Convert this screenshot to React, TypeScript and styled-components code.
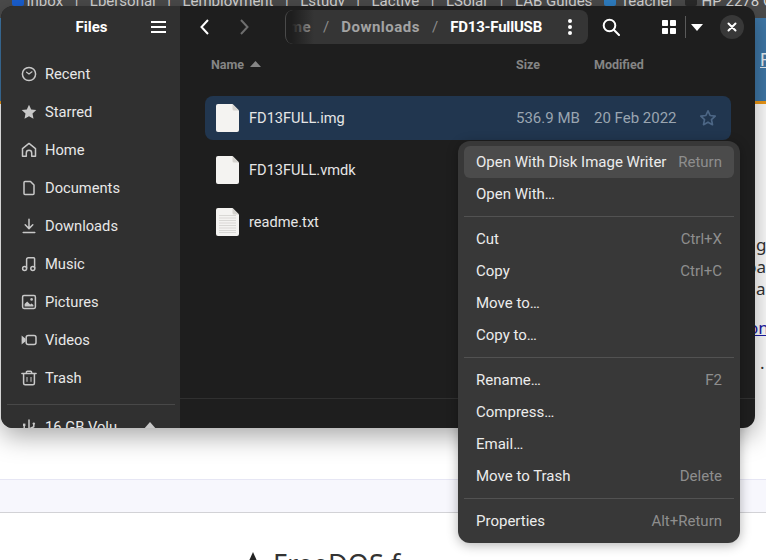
import React from 'react';
import styled, { createGlobalStyle } from 'styled-components';

const GlobalStyle = createGlobalStyle`
  html, body {
    margin: 0;
    padding: 0;
    background: #fff;
  }
  body {
    font-family: Roboto, 'Noto Sans', sans-serif;
  }
`;

const Desktop = styled.div`
  position: relative;
  width: 766px;
  height: 560px;
  overflow: hidden;
  background: #fff;
`;

/* browser page behind the window */
const BookmarkBar = styled.div`
  height: 18px;
  background: #4b4b4b;
  color: #d6d6d6;
  font-size: 15px;
  line-height: 15px;
  display: flex;
  gap: 11.5px;
  padding-left: 12px;
  white-space: nowrap;
  overflow: hidden;
  & > span {
    margin-top: -6px;
  }
`;

const Favicon = styled.i<{ $color: string; $pull?: number }>`
  flex: none;
  width: 12px;
  height: 12px;
  margin-top: -6px;
  margin-right: ${p => p.$pull ?? 0}px;
  border-radius: 2px;
  background: ${p => p.$color};
`;

const SiteHeader = styled.div`
  height: 86px;
  box-sizing: border-box;
  padding: 31px 0 0 760px;
  background: #3f78a8;
  border-bottom: 3px solid #f09a16;
  color: #e8f0f6;
  font-size: 18px;
  line-height: 22px;
  text-decoration: underline;
  white-space: nowrap;
  overflow: hidden;
`;

const ArticleText = styled.div`
  height: 375px;
  box-sizing: border-box;
  padding-top: 130px;
  white-space: nowrap;
  overflow: hidden;
  color: #333;
  font-family: 'Noto Sans', sans-serif;
  font-size: 17px;
  line-height: 22px;
`;

const ArticleLine = styled.div<{ $left: number }>`
  padding-left: ${p => p.$left}px;
`;

const ArticleLink = styled(ArticleLine)`
  margin-top: 17px;
  color: #1a1aa6;
  text-decoration: underline;
`;

const ArticleDot = styled(ArticleLine)`
  margin-top: 13px;
`;

const Band = styled.div`
  height: 32px;
  background: #f7f7fd;
  border-top: 1px solid #e6e6f4;
  border-bottom: 1px solid #d2d2d6;
`;

const SiteTitle = styled.div`
  display: flex;
  align-items: center;
  gap: 10px;
  padding: 34px 0 0 243px;
  color: #333;
  font-family: 'Noto Sans', sans-serif;
  font-size: 27px;
  line-height: 34px;
  white-space: nowrap;
`;

/* files window */
const Window = styled.div`
  position: absolute;
  left: 1px;
  top: 6px;
  width: 754px;
  height: 422px;
  border-radius: 12px;
  overflow: hidden;
  display: grid;
  grid-template-columns: 179px 1fr;
  background: #1e1e1e;
  color: #fff;
  box-shadow: 0 8px 26px rgba(0, 0, 0, 0.35);
`;

const Sidebar = styled.aside`
  background: #303030;
  overflow: hidden;
`;

const SidebarHeader = styled.div`
  height: 42px;
  display: flex;
  align-items: center;
  justify-content: center;
  position: relative;
  padding-left: 2px;
  font-size: 15px;
  font-weight: 700;
`;

const MenuButton = styled.span`
  position: absolute;
  left: 150px;
  top: 15px;
  display: flex;
`;

const Places = styled.div`
  padding-top: 7px;
`;

const Place = styled.div`
  height: 38px;
  display: flex;
  align-items: center;
  gap: 8px;
  padding-left: 20px;
  font-size: 14.7px;
  color: #e8e8e8;
  white-space: nowrap;
  svg {
    flex: none;
    color: #c8c8c8;
  }
`;

const SidebarRule = styled.div`
  height: 1px;
  margin: 7px 5px 3px 6px;
  background: #484848;
`;

const Eject = styled.span`
  margin-left: 18px;
  display: flex;
  color: #c8c8c8;
`;

const Main = styled.main`
  display: flex;
  flex-direction: column;
  min-width: 0;
`;

const HeaderBar = styled.div`
  height: 42px;
  display: flex;
  align-items: center;
  padding-left: 5px;
`;

const NavButton = styled.span<{ $dim?: boolean }>`
  width: 39px;
  display: flex;
  justify-content: center;
  color: ${p => (p.$dim ? '#6e6e6e' : '#fff')};
`;

const PathBar = styled.div`
  position: relative;
  margin-left: 22px;
  width: 303px;
  height: 34px;
  flex: none;
  border-radius: 8px;
  background: #353535;
  display: flex;
  align-items: center;
  justify-content: flex-end;
  overflow: hidden;
  font-size: 15px;
  font-weight: 700;
  white-space: nowrap;
  &::before {
    content: '';
    position: absolute;
    left: 0;
    top: 0;
    bottom: 0;
    width: 28px;
    background: linear-gradient(90deg, #1e1e1e 20%, rgba(53, 53, 53, 0) 100%);
    border-left: 1px solid #4a4a4a;
    border-radius: 8px 0 0 8px;
  }
`;

const Crumb = styled.span<{ $current?: boolean }>`
  color: ${p => (p.$current ? '#fff' : '#a3a3a3')};
  letter-spacing: ${p => (p.$current ? '-0.2px' : '0.5px')};
`;

const CrumbSlash = styled.span`
  color: #8c8c8c;
  font-weight: 400;
  margin: 0 12px;
`;

const PathMenu = styled.span`
  width: 36px;
  margin-left: 10px;
  display: flex;
  justify-content: center;
  flex: none;
`;

const IconButton = styled.span<{ $w: number; $gap?: number }>`
  width: ${p => p.$w}px;
  margin-left: ${p => p.$gap ?? 0}px;
  display: flex;
  justify-content: center;
  align-items: center;
  flex: none;
`;

const ViewDivider = styled.span`
  width: 1px;
  height: 22px;
  background: #5a5a5a;
  margin-left: 5px;
  flex: none;
`;

const CloseButton = styled.span`
  width: 24px;
  height: 24px;
  flex: none;
  border-radius: 50%;
  background: #383838;
  display: flex;
  align-items: center;
  justify-content: center;
  margin-left: 12px;
`;

const ColumnHeader = styled.div`
  height: 32px;
  display: grid;
  grid-template-columns: 305px 78px 1fr;
  padding-left: 31px;
  align-items: center;
  font-size: 12.5px;
  font-weight: 700;
  color: #858585;
`;

const SortName = styled.span`
  display: flex;
  align-items: center;
  gap: 6px;
`;

const FileList = styled.div`
  padding: 16px 24px 0 25px;
  flex: 1;
`;

const FileRow = styled.div<{ $selected?: boolean }>`
  height: 44px;
  margin-bottom: 8px;
  border-radius: 8px;
  display: grid;
  grid-template-columns: 44px 267px 78px 1fr 32px;
  align-items: center;
  font-size: 14.6px;
  color: #e6e6e6;
  background: ${p => (p.$selected ? '#21364f' : 'transparent')};
`;

const FileIconCell = styled.span`
  display: flex;
  justify-content: center;
`;

const FileMeta = styled.span`
  font-size: 15px;
  color: #9aa5b1;
`;

const StarCell = styled.span`
  display: flex;
  color: #4c6685;
`;

const StatusLine = styled.div`
  height: 29px;
  border-top: 1px solid #303030;
`;

const ContextMenu = styled.div`
  position: absolute;
  left: 458px;
  top: 141px;
  width: 282px;
  box-sizing: border-box;
  padding: 5px 6px 6px;
  border-radius: 12px;
  background: #383838;
  box-shadow: 0 2px 12px rgba(0, 0, 0, 0.3);
  font-size: 15px;
  color: #ececec;
`;

const MenuItem = styled.div<{ $active?: boolean }>`
  height: 32px;
  padding: 0 12px;
  display: flex;
  align-items: center;
  justify-content: space-between;
  white-space: nowrap;
  border-radius: 6px;
  background: ${p => (p.$active ? '#4b4b4b' : 'transparent')};
`;

const Shortcut = styled.span`
  color: #8e8e8e;
`;

const MenuRule = styled.div`
  height: 1px;
  margin: 6px 0;
  background: #525252;
`;

const Svg = ({ size = 16, children }: { size?: number; children: React.ReactNode }) => (
  <svg width={size} height={size} viewBox="0 0 16 16" fill="none" stroke="currentColor" strokeWidth="1.5" strokeLinecap="round" strokeLinejoin="round">
    {children}
  </svg>
);

const icons: Record<string, React.ReactNode> = {
  recent: (
    <Svg>
      <circle cx="8" cy="8" r="6.6" />
      <path d="M8 8l3-2.2M8 8L5.6 6.2" strokeWidth="1.2" />
    </Svg>
  ),
  star: (
    <Svg>
      <path d="M8 .8l2.2 4.7 5.1.6-3.8 3.500 1 5.100L8 12.200l-4.500 2.500 1-5.100L.7 6.100l5.100-.6z" fill="currentColor" stroke="none" />
    </Svg>
  ),
  starOutline: (
    <Svg size={18}>
      <path d="M8 1.600l1.900 4.200 4.500.5-3.300 3.100.9 4.500L8 11.700l-4 2.200.9-4.500L1.600 6.300l4.500-.5z" />
    </Svg>
  ),
  home: (
    <Svg>
      <path d="M1.500 14.200V6.600L8 1.400l6.500 5.200v7.600h-3.800v-3.200a2.700 2.700 0 0 0-5.400 0v3.200z" />
    </Svg>
  ),
  doc: (
    <Svg>
      <path d="M3 2.400c0-.6.4-1 1-1h5.500L13 5v8.600c0 .6-.4 1-1 1H4c-.6 0-1-.4-1-1z" />
    </Svg>
  ),
  download: (
    <Svg>
      <path d="M8 1.200v9M4.200 6.800L8 10.600l3.800-3.800M2.200 14.400h11.600" />
    </Svg>
  ),
  music: (
    <Svg>
      <path d="M5.600 12V3.600c0-1 .8-1.800 1.800-1.800h5.200c.6 0 1 .4 1 1V12" />
      <circle cx="3.600" cy="12.400" r="2" />
      <circle cx="11.800" cy="12.400" r="2" />
    </Svg>
  ),
  pictures: (
    <Svg>
      <rect x="1.600" y="1.600" width="12.800" height="12.800" rx="1.400" />
      <circle cx="10.600" cy="5.400" r="1.300" fill="currentColor" stroke="none" />
      <path d="M3.600 12.400V10l2.600-2.600 3 3 1.400-1 1.800 1.600v1.400z" fill="currentColor" stroke="none" />
    </Svg>
  ),
  video: (
    <Svg>
      <rect x="5.200" y="3.400" width="9.800" height="9.200" rx="2" />
      <path d="M.6 3.600l4 3.200v2.400l-4 3.200z" fill="currentColor" stroke="none" />
    </Svg>
  ),
  trash: (
    <Svg>
      <path d="M.9 3.600h14.200M5.400 3.400V2.200c0-.6.4-1 1-1h3.200c.6 0 1 .4 1 1v1.200M2.600 4v9.200c0 .9.6 1.500 1.500 1.500h7.800c.9 0 1.500-.6 1.500-1.500V4" />
      <path d="M6 7.400v4M10 7.400v4" strokeWidth="1" />
    </Svg>
  ),
  usb: (
    <Svg>
      <path d="M8 1v14M3.200 7v2.400l4.800 2.400M12.800 5.400v2.400L8 10" />
      <rect x="2" y="4.600" width="2.400" height="2.400" fill="currentColor" stroke="none" />
      <circle cx="12.800" cy="4.600" r="1.200" fill="currentColor" stroke="none" />
    </Svg>
  ),
};

const places = [
  { icon: 'recent', label: 'Recent' },
  { icon: 'star', label: 'Starred' },
  { icon: 'home', label: 'Home' },
  { icon: 'doc', label: 'Documents' },
  { icon: 'download', label: 'Downloads' },
  { icon: 'music', label: 'Music' },
  { icon: 'pictures', label: 'Pictures' },
  { icon: 'video', label: 'Videos' },
  { icon: 'trash', label: 'Trash' },
];

const FileIcon = ({ lines }: { lines?: boolean }) => (
  <svg width="23" height="28" viewBox="0 0 23 28">
    <path d="M2 0h14.500L23 6.500V26a2 2 0 0 1-2 2H2a2 2 0 0 1-2-2V2a2 2 0 0 1 2-2z" fill="#f4f3f1" />
    <path d="M16.500 0L23 6.500h-5a1.500 1.500 0 0 1-1.500-1.500z" fill="#d5d3cf" />
    {lines &&
      [7, 9.5, 12, 14.5, 17, 19.5, 22, 24].map(y => (
        <rect key={y} x="3" y={y} width="17" height="1" fill="#d9d8d5" />
      ))}
  </svg>
);

const files = [
  { name: 'FD13FULL.img', size: '536.9 MB', date: '20 Feb 2022', selected: true },
  { name: 'FD13FULL.vmdk' },
  { name: 'readme.txt', lines: true },
];

type Entry = { label: string; hint?: string; active?: boolean } | 'rule';

const menuEntries: Entry[] = [
  { label: 'Open With Disk Image Writer', hint: 'Return', active: true },
  { label: 'Open With…' },
  'rule',
  { label: 'Cut', hint: 'Ctrl+X' },
  { label: 'Copy', hint: 'Ctrl+C' },
  { label: 'Move to…' },
  { label: 'Copy to…' },
  'rule',
  { label: 'Rename…', hint: 'F2' },
  { label: 'Compress…' },
  { label: 'Email…' },
  { label: 'Move to Trash', hint: 'Delete' },
  'rule',
  { label: 'Properties', hint: 'Alt+Return' },
];

export default function App() {
  return (
    <Desktop>
      <GlobalStyle />

      <BookmarkBar>
        <Favicon $color="#1a5fd0" $pull={-9} />
        <span>Inbox</span>
        <span>|</span>
        <span>Lpersonal</span>
        <span>|</span>
        <span>Lemployment</span>
        <span>|</span>
        <span>Lstudy</span>
        <span>|</span>
        <span>Lactive</span>
        <span>|</span>
        <span>LSolar</span>
        <span>|</span>
        <span>LAB Guides</span>
        <Favicon $color="#2f7fc4" $pull={-4} />
        <span>reacher</span>
        <Favicon $color="#2a2a2a" $pull={-7} />
        <span>HP 2278 G2</span>
      </BookmarkBar>
      <SiteHeader>R</SiteHeader>
      <ArticleText>
        <ArticleLine $left={756}>gu</ArticleLine>
        <ArticleLine $left={746}>pa</ArticleLine>
        <ArticleLine $left={756}>al</ArticleLine>
        <ArticleLink $left={748}>on</ArticleLink>
        <ArticleDot $left={760}>.</ArticleDot>
      </ArticleText>
      <Band />
      <SiteTitle>
        <svg width="20" height="24" viewBox="0 0 20 24">
          <path d="M10 0l9 20H1z" fill="#222" />
        </svg>
        FreeDOS f
      </SiteTitle>

      <Window>
        <Sidebar>
          <SidebarHeader>
            Files
            <MenuButton>
              <svg width="15" height="12" viewBox="0 0 15 12" fill="#fff">
                <rect width="15" height="2" />
                <rect y="5" width="15" height="2" />
                <rect y="10" width="15" height="2" />
              </svg>
            </MenuButton>
          </SidebarHeader>
          <Places>
            {places.map(p => (
              <Place key={p.label}>
                {icons[p.icon]}
                {p.label}
              </Place>
            ))}
            <SidebarRule />
            <Place>
              {icons.usb}
              16 GB Volu
              <Eject>
                <svg width="14" height="10" viewBox="0 0 14 10" fill="currentColor">
                  <path d="M7 0l7 8H0z" />
                </svg>
              </Eject>
            </Place>
          </Places>
        </Sidebar>

        <Main>
          <HeaderBar>
            <NavButton>
              <svg width="16" height="18" viewBox="0 0 16 18" fill="none" stroke="currentColor" strokeWidth="2">
                <path d="M11 2L4.500 9l6.500 7" />
              </svg>
            </NavButton>
            <NavButton $dim>
              <svg width="16" height="18" viewBox="0 0 16 18" fill="none" stroke="currentColor" strokeWidth="2">
                <path d="M5 2l6.500 7L5 16" />
              </svg>
            </NavButton>
            <PathBar>
              <Crumb>Home</Crumb>
              <CrumbSlash>/</CrumbSlash>
              <Crumb>Downloads</Crumb>
              <CrumbSlash>/</CrumbSlash>
              <Crumb $current>FD13-FullUSB</Crumb>
              <PathMenu>
                <svg width="4" height="16" viewBox="0 0 4 16" fill="#fff">
                  <circle cx="2" cy="2" r="2" />
                  <circle cx="2" cy="8" r="2" />
                  <circle cx="2" cy="14" r="2" />
                </svg>
              </PathMenu>
            </PathBar>
            <IconButton $w={46}>
              <svg width="18" height="18" viewBox="0 0 18 18" fill="none" stroke="#fff" strokeWidth="2">
                <circle cx="7.500" cy="7.500" r="5.800" />
                <path d="M11.800 11.800L17 17" strokeLinecap="round" />
              </svg>
            </IconButton>
            <IconButton $w={22} $gap={24}>
              <svg width="14" height="14" viewBox="0 0 14 14" fill="#fff">
                <rect width="6" height="6" rx="0.8" />
                <rect x="8" width="6" height="6" rx="0.8" />
                <rect y="8" width="6" height="6" rx="0.8" />
                <rect x="8" y="8" width="6" height="6" rx="0.8" />
              </svg>
            </IconButton>
            <ViewDivider />
            <IconButton $w={22}>
              <svg width="12" height="7" viewBox="0 0 12 7" fill="#fff">
                <path d="M0 0h12L6 7z" />
              </svg>
            </IconButton>
            <CloseButton>
              <svg width="10" height="10" viewBox="0 0 10 10" fill="none" stroke="#fff" strokeWidth="2" strokeLinecap="round">
                <path d="M1.500 1.500l7 7M8.500 1.500l-7 7" />
              </svg>
            </CloseButton>
          </HeaderBar>

          <ColumnHeader>
            <SortName>
              Name
              <svg width="11" height="6" viewBox="0 0 11 6" fill="#858585">
                <path d="M5.500 0L11 6H0z" />
              </svg>
            </SortName>
            <span>Size</span>
            <span>Modified</span>
          </ColumnHeader>

          <FileList>
            {files.map(f => (
              <FileRow key={f.name} $selected={f.selected}>
                <FileIconCell>
                  <FileIcon lines={f.lines} />
                </FileIconCell>
                <span>{f.name}</span>
                <FileMeta>{f.size}</FileMeta>
                <FileMeta>{f.date}</FileMeta>
                {f.selected && <StarCell>{icons.starOutline}</StarCell>}
              </FileRow>
            ))}
          </FileList>
          <StatusLine />
        </Main>
      </Window>

      <ContextMenu>
        {menuEntries.map((entry, i) =>
          entry === 'rule' ? (
            <MenuRule key={i} />
          ) : (
            <MenuItem key={i} $active={entry.active}>
              <span>{entry.label}</span>
              {entry.hint && <Shortcut>{entry.hint}</Shortcut>}
            </MenuItem>
          ),
        )}
      </ContextMenu>
    </Desktop>
  );
}
